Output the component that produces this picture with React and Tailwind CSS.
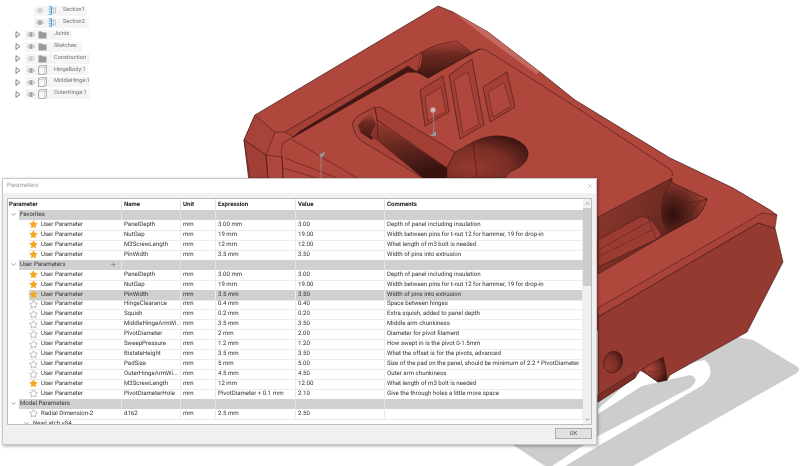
import React from "react";
import { Star, ChevronDown, ChevronUp, X, Plus } from "lucide-react";

const favorites = [
  ["PanelDepth", "3.00 mm", "3.00", "Depth of panel including insulation", true],
  ["NutGap", "19 mm", "19.00", "Width between pins for t-nut 12 for hammer, 19 for drop-in", true],
  ["M3ScrewLength", "12 mm", "12.00", "What length of m3 bolt is needed", true],
  ["PinWidth", "3.5 mm", "3.50", "Width of pins into extrusion", true],
];

const userParams = [
  ["PanelDepth", "3.00 mm", "3.00", "Depth of panel including insulation", true],
  ["NutGap", "19 mm", "19.00", "Width between pins for t-nut 12 for hammer, 19 for drop-in", true],
  ["PinWidth", "3.5 mm", "3.50", "Width of pins into extrusion", true, true],
  ["HingeClearance", "0.4 mm", "0.40", "Space between hinges", false],
  ["Squish", "0.2 mm", "0.20", "Extra squish, added to panel depth", false],
  ["MiddleHingeArmWi...", "3.5 mm", "3.50", "Middle arm chunkiness", false],
  ["PivotDiameter", "2 mm", "2.00", "Diameter for pivot filament", false],
  ["SweepPressure", "1.2 mm", "1.20", "How swept in is the pivot 0-1.5mm", false],
  ["BistateHeight", "3.5 mm", "3.50", "What the offset is for the pivots, advanced", false],
  ["PadSize", "5 mm", "5.00", "Size of the pad on the panel, should be minimum of 2.2 * PivotDiameter", false],
  ["OuterHingeArmWi...", "4.5 mm", "4.50", "Outer arm chunkiness", false],
  ["M3ScrewLength", "12 mm", "12.00", "What length of m3 bolt is needed", true],
  ["PivotDiameterHole", "PivotDiameter + 0.1 mm", "2.10", "Give the through holes a little more space", false],
];

const tree = [
  { label: "Section1", kind: "section", faded: true, w: "w-[53px]" },
  { label: "Section2", kind: "section", w: "w-[55px]" },
  { label: "Joints", kind: "folder", w: "w-[47px]" },
  { label: "Sketches", kind: "folder", w: "w-[57px]" },
  { label: "Construction", kind: "folder", faded: true, w: "w-[65px]" },
  { label: "HingeBody:1", kind: "body", w: "w-[63px]" },
  { label: "MiddleHinge:1", kind: "body", w: "w-[65px]" },
  { label: "OuterHinge:1", kind: "body", w: "w-[65px]" },
];

const COLS = "grid grid-cols-[114px_59px_35px_80px_89px_198px]";

const EyeIcon = ({ faded }) => (
  <svg width="8" height="7" viewBox="0 0 8 7" className="ml-[2px] shrink-0">
    <path d="M.3 3.5Q4 -.8 7.7 3.5Q4 7.8 .3 3.5Z" fill="none" stroke={faded ? "#c8c8c8" : "#999"} strokeWidth="0.8" />
    <circle cx="4" cy="3.5" r="1.5" fill={faded ? "#c8c8c8" : "#999"} />
    {faded && <path d="M1.5 6.5L6.5 .5" stroke="#c8c8c8" strokeWidth="0.7" />}
  </svg>
);

const TreeIcon = ({ kind }) => {
  if (kind === "folder")
    return (
      <svg width="9" height="8" viewBox="0 0 9 8" className="ml-[3px] shrink-0">
        <path d="M.5 .5H4L5 1.5H8.5V7.5H.5Z" fill="#999" />
      </svg>
    );
  if (kind === "body")
    return (
      <svg width="9" height="10" viewBox="0 0 9 10" className="ml-[3px] shrink-0">
        <path d="M2.5 .6H8.4V7.6Q8.4 9.4 6.5 9.4H.6V2.5Q.6 .6 2.5 .6Z" fill="#fafafa" stroke="#888" strokeWidth="0.7" />
        <path d="M.8 2.6H6.6V9.2M6.6 2.6L8.2 .8" fill="none" stroke="#aaa" strokeWidth="0.5" />
      </svg>
    );
  return (
    <svg width="8" height="9" viewBox="0 0 8 9" className="ml-[4px] shrink-0">
      <path d="M.8 .8H3.5V8.2H.8M3.5 .8V8.2M.8 3H3.5M.8 5.8H3.5" fill="none" stroke="#3b9ce0" strokeWidth="0.9" />
      <path d="M3.5 2H7.4V7H3.5M5.4 2V7" fill="none" stroke="#aaa" strokeWidth="0.6" />
    </svg>
  );
};

const TreeRow = ({ item }) => {
  const isSection = item.kind === "section";
  return (
    <div className={`flex items-center h-[11.9px] ${isSection ? "pl-[34px]" : "pl-[15px]"}`}>
      {!isSection && (
        <svg width="6" height="7" viewBox="0 0 6 7" className="mr-[4px] shrink-0">
          <path d="M1 .5v6M1 .7l4 2.8-4 2.8" fill="none" stroke="#666" strokeWidth="0.8" />
        </svg>
      )}
      <div className={`flex items-center h-[10px] bg-[#f5f5f5] ${item.w}`}>
        <EyeIcon faded={item.faded} />
        <TreeIcon kind={item.kind} />
        <span className="ml-[7px] text-[5.6px] leading-none text-[#777] whitespace-nowrap">{item.label}</span>
      </div>
    </div>
  );
};

const GroupRow = ({ label, plus }) => (
  <div className="flex h-[9.95px] items-center bg-white">
    <div className="w-[11px] flex justify-center shrink-0">
      <ChevronDown size={7} className="text-[#555]" />
    </div>
    <div className="flex-1 h-full bg-[#d0d0d0] grid grid-cols-[103px_59px_35px_80px_89px_198px] text-[6.1px] leading-[10px] text-[#333]">
      <div className="relative pl-[1px] border-r border-[#e4e4e4] whitespace-nowrap">
        {label}
        {plus && <Plus size={7} className="absolute right-[4px] top-[1px] text-[#777]" />}
      </div>
      <div className="border-r border-[#e4e4e4]" />
      <div className="border-r border-[#e4e4e4]" />
      <div className="border-r border-[#e4e4e4]" />
      <div className="border-r border-[#e4e4e4]" />
    </div>
  </div>
);

const ParamRow = ({ row, type = "User Parameter", unit = "mm" }) => {
  const [name, expr, value, comment, fav, selected] = row;
  const cell = `pl-[2px] border-r border-b border-[#ececec] whitespace-nowrap overflow-hidden ${selected ? "bg-[#d0d0d0]" : ""}`;
  return (
    <div className={`${COLS} h-[9.95px] text-[6.1px] leading-[10px] text-[#333]`}>
      <div className="pl-[21px]">
        <div className={`flex items-center h-full border-b border-[#ececec] ${selected ? "bg-[#d0d0d0]" : ""}`}>
          <Star
            size={9}
            strokeWidth={fav ? 1 : 1.5}
            className={`shrink-0 ${fav ? "text-[#f0a92e] fill-[#f5a623]" : "text-[#888]"}`}
          />
          <span className="ml-[3px] whitespace-nowrap">{type}</span>
        </div>
      </div>
      <div className={cell}>{name}</div>
      <div className={cell}>{unit}</div>
      <div className={cell}>{expr}</div>
      <div className={cell}>{value}</div>
      <div className={cell}>{comment}</div>
    </div>
  );
};

// the hinge model behind the dialog, in page coordinates
const Model = () => (
  <svg width="800" height="466" viewBox="0 0 800 466" className="absolute left-0 top-0">
    <defs>
      <linearGradient id="bowl" x1="0" y1="0" x2="0" y2="1">
        <stop offset="0" stopColor="#a8433a" />
        <stop offset="0.4" stopColor="#6a2820" />
        <stop offset="1" stopColor="#3f1612" />
      </linearGradient>
      <radialGradient id="hole" cx="0.3" cy="0.75" r="0.85">
        <stop offset="0" stopColor="#96392f" />
        <stop offset="0.55" stopColor="#7a2e26" />
        <stop offset="1" stopColor="#3b1411" />
      </radialGradient>
      <linearGradient id="wall" x1="0" y1="0" x2="0.35" y2="1">
        <stop offset="0" stopColor="#9a3c32" />
        <stop offset="0.45" stopColor="#6b2a22" />
        <stop offset="1" stopColor="#3a1310" />
      </linearGradient>
      <linearGradient id="slotWall" x1="1" y1="0.7" x2="0" y2="0.3">
        <stop offset="0" stopColor="#2f0f0d" />
        <stop offset="0.45" stopColor="#6b2a22" />
        <stop offset="1" stopColor="#8c372e" />
      </linearGradient>
      <radialGradient id="cap" cx="0.25" cy="0.65" r="0.8">
        <stop offset="0" stopColor="#2f0f0d" />
        <stop offset="0.6" stopColor="#6b2a22" />
        <stop offset="1" stopColor="#a8433a" />
      </radialGradient>
      <radialGradient id="nose" cx="0.3" cy="0.5" r="0.7">
        <stop offset="0" stopColor="#b0473d" />
        <stop offset="0.6" stopColor="#7a2e26" />
        <stop offset="1" stopColor="#3f1612" />
      </radialGradient>
    </defs>

    {/* ground shadow */}
    <path d="M513 445L598 395L700 330L753 340L798 367Q801 371 795 374L633 466H545Z" fill="#cdcdcd" />
    <path
      d="M640 372L705 360Q717 372 703 385L600 445L562 468L552 466L598 436L690 388Q701 379 690 375L642 386L598 414V409Z"
      fill="#fff"
    />

    {/* body, top face */}
    <path
      d="M255 115L438 6L453 12L488 32L540 72L575 100L670 158L733 188L770 210L777 215L762 225L598 330L400 300L250 190L244 140Z"
      fill="#b0473d"
      stroke="#3a1512"
      strokeWidth="0.7"
      strokeLinejoin="round"
    />
    <path d="M453 12L488 32L540 72L536 74L484 36Z" fill="#c4695f" />

    {/* body, right end */}
    <path
      d="M598 317L758 223L775 228L783 262L747 332L670 375L667 380L658 382L648 375L640 370L635 378L598 402Z"
      fill="#953a30"
      stroke="#3a1512"
      strokeWidth="0.6"
      strokeLinejoin="round"
    />
    <path d="M598 308L762 213L777 215L775 228L758 223L598 317Z" fill="#a8433a" stroke="#3a1512" strokeWidth="0.5" />
    <path d="M642 369L663 357L666 370L667 380L658 382L648 375Z" fill="url(#nose)" stroke="#3a1512" strokeWidth="0.5" />
    <path d="M648 371Q656 374 664 368" fill="none" stroke="#3a1512" strokeWidth="0.4" />
    <path d="M598 395L635 372L635 378L598 402Z" fill="#7a2e26" stroke="#3a1512" strokeWidth="0.4" />
    <ellipse cx="613" cy="362" rx="9.5" ry="11" fill="url(#hole)" stroke="#3a1512" strokeWidth="0.5" transform="rotate(20 613 362)" />

    {/* left corner facets */}
    <path d="M255 115L275 132L266 155L244 140Z" fill="#a8433a" stroke="#3a1512" strokeWidth="0.5" />
    <path d="M244 140L250 178H268L266 155Z" fill="#a13f36" stroke="#3a1512" strokeWidth="0.5" />
    <path d="M275 132L285 132L422 52M266 155L282 157L283 178M266 155L268 178" stroke="#3a1512" strokeWidth="0.5" fill="none" />

    {/* groove between rim and plate */}
    <path d="M285 132L422 52L417 72L407 72L293 137Z" fill="#a33f35" stroke="#3a1512" strokeWidth="0.5" />
    <path d="M293 137L300 131L408 66L417 72L407 72Z" fill="#431713" stroke="#3a1512" strokeWidth="0.4" />
    <path d="M422 52Q436 43 457 41L472 53L480 49L428 78L417 72Q424 64 422 52Z" fill="url(#bowl)" stroke="#3a1512" strokeWidth="0.5" />
    <path d="M424 60Q440 52 460 52" fill="none" stroke="#3a1512" strokeWidth="0.3" />

    {/* plate edges */}
    <path
      d="M283 143L407 72Q417 70 428 78L476 50Q480 48 486 50L565 100L668 168Q674 172 672 176"
      fill="none"
      stroke="#3a1512"
      strokeWidth="0.6"
    />
    <path d="M283 143Q280 150 282 157L283 178M293 140L357 178M285 158L337 178M283 168L317 178" fill="none" stroke="#3a1512" strokeWidth="0.5" />

    {/* slot and centre block */}
    <path d="M375 107L363 113Q350 120 353 127Q354 134 360 140L423 178H450L447 168L377 120Z" fill="#a8433a" stroke="#3a1512" strokeWidth="0.6" />
    <path d="M358 126Q364 116 372 113L377 128L372 140L361 133Z" fill="url(#bowl)" />
    <path d="M370 135L377 122L447 168V178H423Z" fill="url(#wall)" />
    <path d="M380 107L375 108L377 120L447 168L455 152Z" fill="#a33f35" stroke="#3a1512" strokeWidth="0.6" strokeLinejoin="round" />
    <path d="M377 120L378 138M447 168V178" stroke="#3a1512" strokeWidth="0.5" fill="none" />

    {/* big round hole next to the block */}
    <path d="M455 152L473 142Q492 132 512 138Q530 145 528 156Q526 166 510 172L505 178H447V168Z" fill="url(#hole)" stroke="#3a1512" strokeWidth="0.5" strokeLinejoin="round" />
    <path d="M473 142L477 178" stroke="#3a1512" strokeWidth="0.5" />

    {/* three pockets in the block */}
    <path d="M420 90L443 76L449 112L425 126Z" fill="#a33f35" stroke="#3a1512" strokeWidth="0.6" />
    <path d="M425 97L441 87L446 111L428 121Z" fill="#b0473d" stroke="#3a1512" strokeWidth="0.4" />
    <path d="M449 75L472 59L484 125L460 139Z" fill="#a33f35" stroke="#3a1512" strokeWidth="0.6" />
    <path d="M454 80L468 72L479 124L463 133Z" fill="#b0473d" stroke="#3a1512" strokeWidth="0.4" />
    <path d="M483 87L507 72L515 107L490 122Z" fill="#a33f35" stroke="#3a1512" strokeWidth="0.6" />
    <path d="M488 92L504 83L511 106L493 117Z" fill="#b0473d" stroke="#3a1512" strokeWidth="0.4" />

    {/* dimension markers */}
    <path d="M433 112L434 127L433 135" stroke="#999" strokeWidth="0.7" fill="none" />
    <circle cx="433" cy="110" r="2.5" fill="#e0b4ae" stroke="#a99" strokeWidth="0.8" />
    <path d="M430 136L436 131V136Z" fill="#999" />
    <path d="M321 153V178" stroke="#999" strokeWidth="0.7" />
    <path d="M319 155L326 151L322 158Z" fill="#999" />

    {/* right side slot with the pin */}
    <path d="M598 217L672 178L672 183L707 199Q704 210 697 217L670 232L598 274Z" fill="url(#slotWall)" stroke="#3a1512" strokeWidth="0.6" strokeLinejoin="round" />
    <path d="M671 182Q658 200 663 222L670 232L697 217Q704 210 707 199Z" fill="url(#cap)" stroke="#3a1512" strokeWidth="0.5" />
    <path d="M664 196L690 203L707 199L697 204L687 218" fill="none" stroke="#3a1512" strokeWidth="0.4" />
    <path d="M598 240L640 217Q648 216 653 222L662 235L655 240L598 267Z" fill="#9a3c32" stroke="#3a1512" strokeWidth="0.5" strokeLinejoin="round" />
    <path d="M598 250L650 221M598 257L652 230M648 217L656 238" fill="none" stroke="#3a1512" strokeWidth="0.4" />
  </svg>
);

export default function App() {
  return (
    <div className="relative w-[800px] h-[466px] bg-white overflow-hidden blur-[0.4px] font-['Roboto',sans-serif] [text-rendering:geometricPrecision]">
      <Model />

      {/* browser tree */}
      <div className="relative flex flex-col pt-[5px]">
        {tree.map((item) => (
          <TreeRow key={item.label} item={item} />
        ))}
      </div>

      {/* parameters dialog */}
      <div className="absolute left-[2px] top-[178px] w-[595px] h-[267px] bg-[#f0f0f0] border border-[#c8c8c8] shadow-[1px_1px_3px_rgba(0,0,0,0.35)] flex flex-col">
        <div className="h-[14px] bg-white flex items-center justify-between pl-[4px] pr-[2px] shrink-0">
          <span className="text-[6.1px] text-[#999]">Parameters</span>
          <X size={8} className="text-[#c4c4c4]" />
        </div>
        <div className="mt-[5px] mx-[4px] h-[227px] border border-[#bdbdbd] bg-white flex overflow-hidden">
          <div className="w-[575px] shrink-0 overflow-hidden">
            <div className={`${COLS} h-[11px] text-[6.1px] leading-[11px] font-bold text-[#222]`}>
              <div className="pl-[1px] border-r border-[#e4e4e4]">Parameter</div>
              <div className="pl-[2px] border-r border-[#e4e4e4]">Name</div>
              <div className="pl-[2px] border-r border-[#e4e4e4]">Unit</div>
              <div className="pl-[2px] border-r border-[#e4e4e4]">Expression</div>
              <div className="pl-[2px] border-r border-[#e4e4e4]">Value</div>
              <div className="pl-[2px]">Comments</div>
            </div>
            <GroupRow label="Favorites" />
            {favorites.map((row) => (
              <ParamRow key={row[0]} row={row} />
            ))}
            <GroupRow label="User Parameters" plus />
            {userParams.map((row) => (
              <ParamRow key={row[0]} row={row} />
            ))}
            <GroupRow label="Model Parameters" />
            <ParamRow row={["d162", "2.5 mm", "2.50", "", false]} type="Radial Dimension-2" />
            <div className="flex items-start h-[10px] pl-[15px] text-[6.1px] leading-[10px] text-[#333]">
              <ChevronDown size={7} className="text-[#555] mr-[3px] mt-[1px]" />
              NewLatch v84
            </div>
          </div>
          <div className="flex-1 bg-[#f0f0f0] flex flex-col items-center">
            <ChevronUp size={7} className="my-[1px] text-[#555]" />
            <div className="w-full h-[78px] bg-[#cdcdcd]" />
            <div className="flex-1" />
            <ChevronDown size={7} className="my-[1px] text-[#555]" />
          </div>
        </div>
        <div className="flex justify-end pr-[4px] pt-[3px]">
          <button className="w-[37px] h-[11px] bg-[#e1e1e1] border border-[#adadad] text-[5.6px] leading-none text-[#444]">OK</button>
        </div>
      </div>
    </div>
  );
}
